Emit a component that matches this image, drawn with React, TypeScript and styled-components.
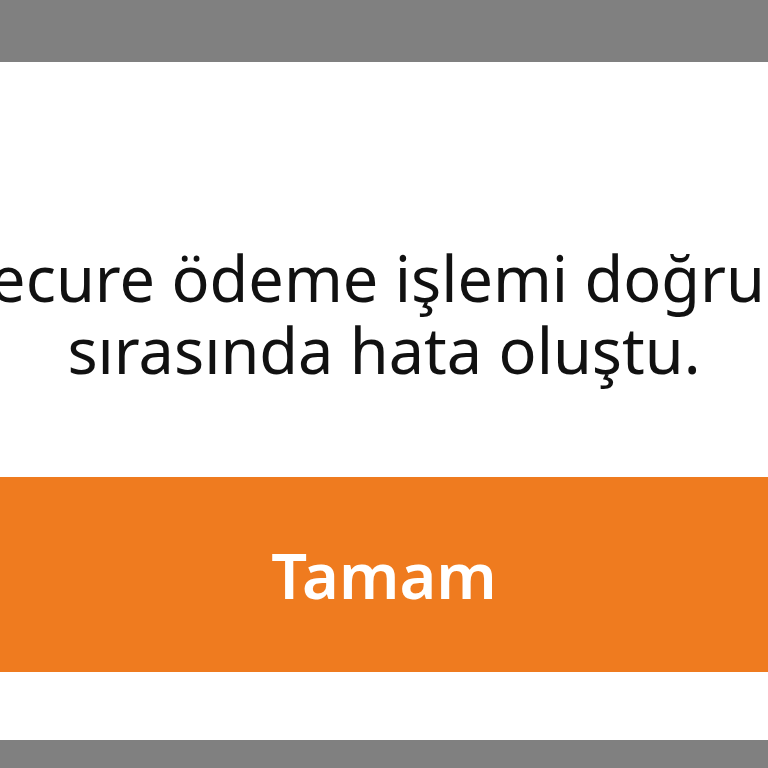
import React from 'react';
import styled, { createGlobalStyle } from 'styled-components';

const GlobalStyle = createGlobalStyle`
  html, body {
    margin: 0;
    padding: 0;
    height: 100%;
    overflow: hidden;
    background: #808080;
  }
  #root {
    height: 100%;
  }
`;

const Screen = styled.div`
  display: flex;
  flex-direction: column;
  height: 768px;
  width: 768px;
  overflow: hidden;
  background: #808080;
`;

const Backdrop = styled.div<{ $h: number }>`
  flex: 0 0 ${(p) => p.$h}px;
  background: #808080;
`;

const Dialog = styled.div`
  flex: 1;
  display: flex;
  flex-direction: column;
  background: #ffffff;
  padding-bottom: 68px;
`;

const Message = styled.div`
  flex: 1;
  display: flex;
  align-items: center;
  justify-content: center;
  padding-top: 88px;
`;

const Text = styled.p`
  margin: 0;
  font-family: 'Noto Sans', sans-serif;
  font-size: 63px;
  line-height: 72px;
  color: #111111;
  text-align: center;
  white-space: nowrap;
`;

const OkButton = styled.button`
  flex: 0 0 195px;
  border: none;
  background: #ef7b1f;
  color: #ffffff;
  font-family: 'Noto Sans', sans-serif;
  font-weight: 600;
  font-size: 63px;
  line-height: 1;
  padding: 0;
  cursor: pointer;
`;

function App() {
  return (
    <>
      <GlobalStyle />
      <Screen>
        <Backdrop $h={62} />
        <Dialog>
          <Message>
            <Text>
              3D Secure ödeme işlemi doğrulama
              <br />
              sırasında hata oluştu.
            </Text>
          </Message>
          <OkButton type="button">Tamam</OkButton>
        </Dialog>
        <Backdrop $h={28} />
      </Screen>
    </>
  );
}

export default App;
